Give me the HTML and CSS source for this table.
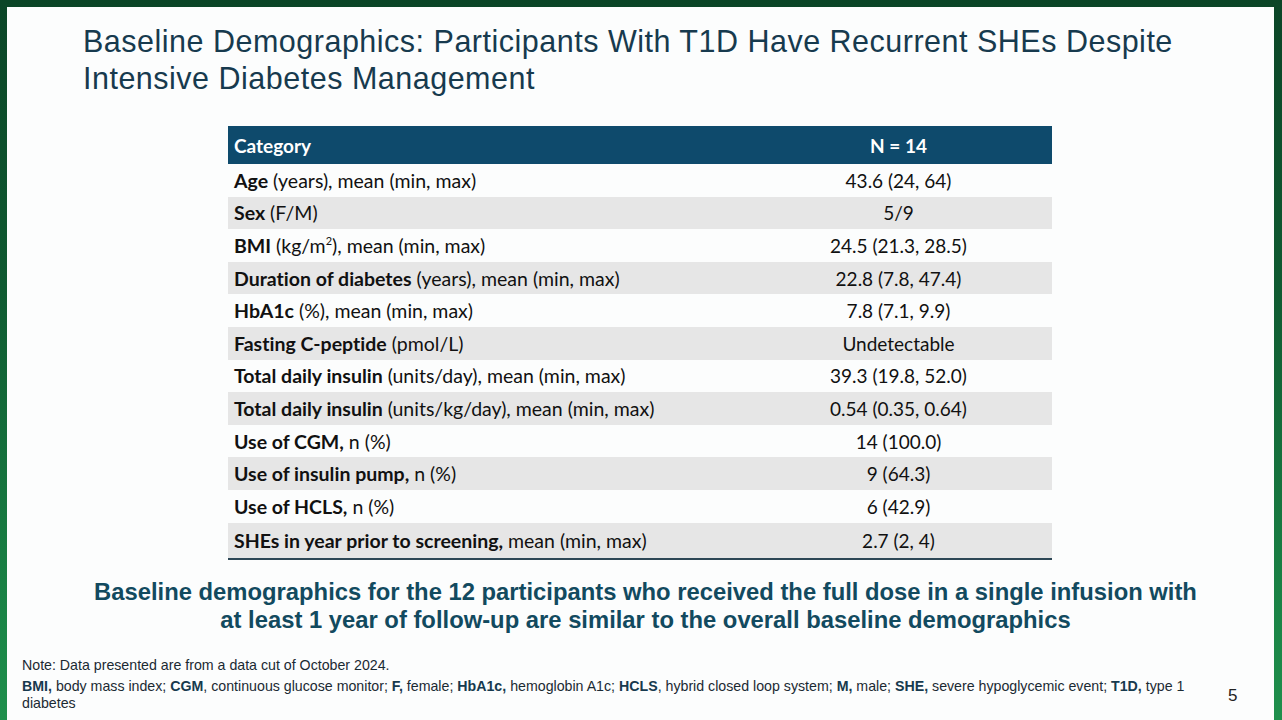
FILE: index.html
```html
<!DOCTYPE html>
<html>
<head>
<meta charset="utf-8">
<link rel="stylesheet" href="styles.css">
</head>
<body>
<div class="frame">
  <div class="slide">
    <h1 class="title">Baseline Demographics: Participants With T1D Have Recurrent SHEs Despite Intensive Diabetes Management</h1>
    <table class="demo">
      <thead>
        <tr><th class="c1">Category</th><th class="c2">N = 14</th></tr>
      </thead>
      <tbody>
        <tr><td class="c1"><b>Age</b> (years), mean (min, max)</td><td class="c2">43.6 (24, 64)</td></tr>
        <tr class="alt"><td class="c1"><b>Sex</b> (F/M)</td><td class="c2">5/9</td></tr>
        <tr><td class="c1"><b>BMI</b> (kg/m<sup>2</sup>), mean (min, max)</td><td class="c2">24.5 (21.3, 28.5)</td></tr>
        <tr class="alt"><td class="c1"><b>Duration of diabetes</b> (years), mean (min, max)</td><td class="c2">22.8 (7.8, 47.4)</td></tr>
        <tr><td class="c1"><b>HbA1c</b> (%), mean (min, max)</td><td class="c2">7.8 (7.1, 9.9)</td></tr>
        <tr class="alt"><td class="c1"><b>Fasting C-peptide</b> (pmol/L)</td><td class="c2">Undetectable</td></tr>
        <tr><td class="c1"><b>Total daily insulin</b> (units/day), mean (min, max)</td><td class="c2">39.3 (19.8, 52.0)</td></tr>
        <tr class="alt"><td class="c1"><b>Total daily insulin</b> (units/kg/day), mean (min, max)</td><td class="c2">0.54 (0.35, 0.64)</td></tr>
        <tr><td class="c1"><b>Use of CGM,</b> n (%)</td><td class="c2">14 (100.0)</td></tr>
        <tr class="alt"><td class="c1"><b>Use of insulin pump,</b> n (%)</td><td class="c2">9 (64.3)</td></tr>
        <tr><td class="c1"><b>Use of HCLS,</b> n (%)</td><td class="c2">6 (42.9)</td></tr>
        <tr class="alt last"><td class="c1"><b>SHEs in year prior to screening,</b> mean (min, max)</td><td class="c2">2.7 (2, 4)</td></tr>
      </tbody>
    </table>
    <p class="statement">Baseline demographics for the 12 participants who received the full dose in a single infusion with<br>at least 1 year of follow-up are similar to the overall baseline demographics</p>
    <div class="footer">
      <div class="notes">
        <p class="note">Note: Data presented are from a data cut of October 2024.</p>
        <p class="abbr"><b>BMI,</b> body mass index; <b>CGM</b>, continuous glucose monitor; <b>F,</b> female; <b>HbA1c,</b> hemoglobin A1c; <b>HCLS</b>, hybrid closed loop system; <b>M,</b> male; <b>SHE,</b> severe hypoglycemic event; <b>T1D,</b> type 1<br><span>diabetes</span></p>
      </div>
      <div class="pagenum">5</div>
    </div>
  </div>
</div>
</body>
</html>
```

FILE: styles.css
```css
html, body {
  margin: 0;
  padding: 0;
}
body {
  width: 1282px;
  height: 720px;
  overflow: hidden;
}
.frame {
  width: 1282px;
  height: 720px;
  background: linear-gradient(180deg, #0b4527 0%, #0f5a31 40%, #1a8446 85%, #1f8f4c 100%);
  padding: 7px 8px 0 7px;
  box-sizing: border-box;
}
.slide {
  background: #fcfdfd;
  height: 713px;
  display: flex;
  flex-direction: column;
  font-family: "Liberation Sans", Arial, sans-serif;
}
.title {
  margin: 0;
  padding: 16px 0 0 76px;
  width: 1110px;
  font-weight: normal;
  font-size: 30.5px;
  line-height: 37px;
  letter-spacing: 0.5px;
  color: #173a4e;
}
.demo {
  margin: 29px 0 0 221px;
  width: 824px;
  border-collapse: collapse;
  font-family: "Lato", "Open Sans", sans-serif;
  font-size: 19.5px;
  font-variant-ligatures: none;
  color: #111;
}
.demo th {
  background: #0e4a6c;
  color: #fff;
  font-weight: bold;
  height: 38px;
  padding: 0 6px;
  font-size: 19px;
}
.demo th.c1 { text-align: left; }
.demo td {
  height: 32.6px;
  padding: 0 6px;
  box-sizing: border-box;
}
.demo .c1 { width: 505px; text-align: left; }
.demo .c2 { text-align: center; }
.demo td.c2 { font-size: 19px; }
.demo tr.alt td { background: #e6e6e6; }
.demo tr.last td {
  height: 36px;
  border-bottom: 2px solid #2d4756;
}
.demo sup {
  font-size: 11px;
  line-height: 0;
  vertical-align: 8px;
}
.statement {
  margin: 18px 0 0 0;
  padding-left: 10px;
  text-align: center;
  font-weight: bold;
  font-size: 23.8px;
  line-height: 28px;
  color: #124a5f;
}
.footer {
  margin-top: auto;
  display: flex;
  align-items: flex-end;
  padding: 0 0 8px 15px;
}
.notes {
  width: 1175px;
  color: #1b2a33;
}
.note {
  margin: 0 0 4px 0;
  font-size: 14.2px;
  line-height: 17px;
}
.abbr {
  margin: 0;
  font-size: 14.2px;
  line-height: 17px;
  color: #1b2a33;
}
.abbr b { color: #173a4e; }
.pagenum {
  margin-left: 31px;
  margin-bottom: 6px;
  font-size: 17px;
  color: #222;
}
```
